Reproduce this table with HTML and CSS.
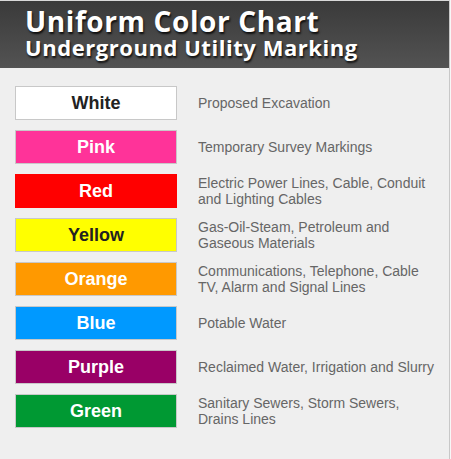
FILE: index.html
```html
<!DOCTYPE html>
<html>
<head>
<meta charset="utf-8">
<link rel="stylesheet" href="styles.css">
</head>
<body>
<div class="chart">
  <div class="header">
    <div class="title">Uniform Color Chart</div>
    <div class="subtitle">Underground Utility Marking</div>
  </div>
  <div class="rows">
    <div class="row"><div class="swatch white">White</div><div class="desc">Proposed Excavation</div></div>
    <div class="row"><div class="swatch pink">Pink</div><div class="desc">Temporary Survey Markings</div></div>
    <div class="row"><div class="swatch red">Red</div><div class="desc">Electric Power Lines, Cable, Conduit<br>and Lighting Cables</div></div>
    <div class="row"><div class="swatch yellow">Yellow</div><div class="desc">Gas-Oil-Steam, Petroleum and<br>Gaseous Materials</div></div>
    <div class="row"><div class="swatch orange">Orange</div><div class="desc">Communications, Telephone, Cable<br>TV, Alarm and Signal Lines</div></div>
    <div class="row"><div class="swatch blue">Blue</div><div class="desc">Potable Water</div></div>
    <div class="row"><div class="swatch purple">Purple</div><div class="desc">Reclaimed Water, Irrigation and Slurry</div></div>
    <div class="row"><div class="swatch green">Green</div><div class="desc">Sanitary Sewers, Storm Sewers,<br>Drains Lines</div></div>
  </div>
</div>
</body>
</html>
```
FILE: styles.css
```css
html, body {
  margin: 0;
  padding: 0;
  background: #f7f7f7;
}
.chart {
  width: 450px;
  height: 459px;
  background: #efefef;
  border-right: 1px solid #c8c8c8;
  border-top: 1px solid #d8d8d8;
  box-sizing: border-box;
  font-family: Arial, "Liberation Sans", sans-serif;
}
.header {
  height: 67px;
  background: linear-gradient(#3a3a3a, #535353);
  padding: 5px 0 0 25px;
  box-sizing: border-box;
  font-family: "Open Sans", sans-serif;
  font-weight: 700;
  color: #fff;
  text-shadow: 1px 2px 2px rgba(0,0,0,0.8);
}
.title {
  font-size: 28px;
  line-height: 30px;
  letter-spacing: 0.6px;
}
.subtitle {
  font-size: 22px;
  line-height: 22px;
  letter-spacing: 0.55px;
}
.rows {
  display: flex;
  flex-direction: column;
  gap: 10px;
  padding: 18px 0 0 15px;
}
.row {
  display: flex;
  align-items: center;
  height: 34px;
}
.swatch {
  width: 162px;
  height: 34px;
  box-sizing: border-box;
  border: 1px solid #c8c8c8;
  display: flex;
  align-items: center;
  justify-content: center;
  font-weight: bold;
  font-size: 18px;
  color: #fff;
  flex: none;
}
.desc {
  margin-left: 21px;
  font-size: 14px;
  line-height: 16px;
  color: #666;
}
.white { background: #fff; color: #222; }
.pink { background: #ff3399; }
.red { background: #ff0000; border-color: #ff0000; }
.yellow { background: #ffff00; color: #222; }
.orange { background: #ff9900; }
.blue { background: #0099ff; }
.purple { background: #990066; }
.green { background: #009933; }
```
